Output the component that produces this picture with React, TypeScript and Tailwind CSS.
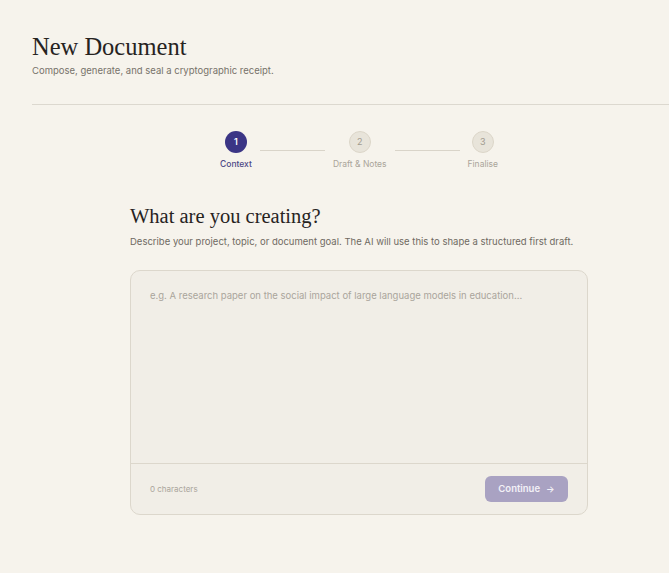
import React from "react";

const sans = { fontFamily: "Inter, 'Liberation Sans', sans-serif" };
const serif = { fontFamily: "'Liberation Serif', 'Times New Roman', serif" };

function Step({ n, label, active }: { n: number; label: string; active?: boolean }) {
  return (
    <div className="flex flex-col items-center gap-[5px]">
      <div
        className={
          active
            ? "flex h-[22px] w-[22px] items-center justify-center rounded-full bg-[#3b3585] text-[9px] font-semibold text-white"
            : "flex h-[22px] w-[22px] items-center justify-center rounded-full border border-[#dcd6c9] bg-[#e8e4da] text-[9px] text-[#a19b8f]"
        }
      >
        {n}
      </div>
      <div className={active ? "text-[8.5px] font-medium text-[#4d4887]" : "text-[8.5px] text-[#aaa59a]"}>{label}</div>
    </div>
  );
}

export default function App() {
  return (
    <div className="min-h-[573px] w-full overflow-hidden bg-[#f6f3ec]" style={sans}>
      <div className="w-[718px] pl-[32px]">
        <div className="w-[654px] pt-[33px]">
          <h1 className="text-[24.5px] leading-[28px] text-[#27231f]" style={serif}>
            New Document
          </h1>
          <p className="mt-[4px] text-[9.5px] leading-[12px] text-[#77726a]">Compose, generate, and seal a cryptographic receipt.</p>
          <div className="mt-[27px] h-px w-full bg-[#dcd8cf]" />

          <div className="mt-[26px] flex items-center justify-center">
            <Step n={1} label="Context" active />
            <div className="mx-2 h-px w-[65px] bg-[#d9d4c9]" />
            <Step n={2} label="Draft & Notes" />
            <div className="mx-2 h-px w-[65px] bg-[#d9d4c9]" />
            <Step n={3} label="Finalise" />
          </div>

          <div className="mx-auto mt-[33px] w-[458px]">
            <h2 className="text-[20.5px] leading-[24px] text-[#27231f]" style={serif}>
              What are you creating?
            </h2>
            <p className="mt-[8px] text-[9.5px] leading-[12px] text-[#6f6a62]">
              Describe your project, topic, or document goal. The AI will use this to shape a structured first draft.
            </p>

            <div className="mt-[22px] flex h-[245px] flex-col overflow-hidden rounded-[10px] border border-[#dcd7cc] bg-[#f1eee7]">
              <div className="flex-1 px-[19px] pt-[19px] text-[9.5px] leading-[12px] text-[#aaa59c]">
                e.g. A research paper on the social impact of large language models in education...
              </div>
              <div className="flex h-[51px] items-center justify-between border-t border-[#dcd7cc] pl-[19px] pr-[19px]">
                <span className="text-[8px] text-[#aaa59c]">0 characters</span>
                <button className="flex h-[26px] w-[83px] items-center justify-center gap-[6px] rounded-[6px] bg-[#a9a2c2] text-[9.5px] font-semibold text-[#f3f1f7]">
                  Continue
                  <span className="text-[9px]">→</span>
                </button>
              </div>
            </div>
          </div>
        </div>
      </div>
    </div>
  );
}
